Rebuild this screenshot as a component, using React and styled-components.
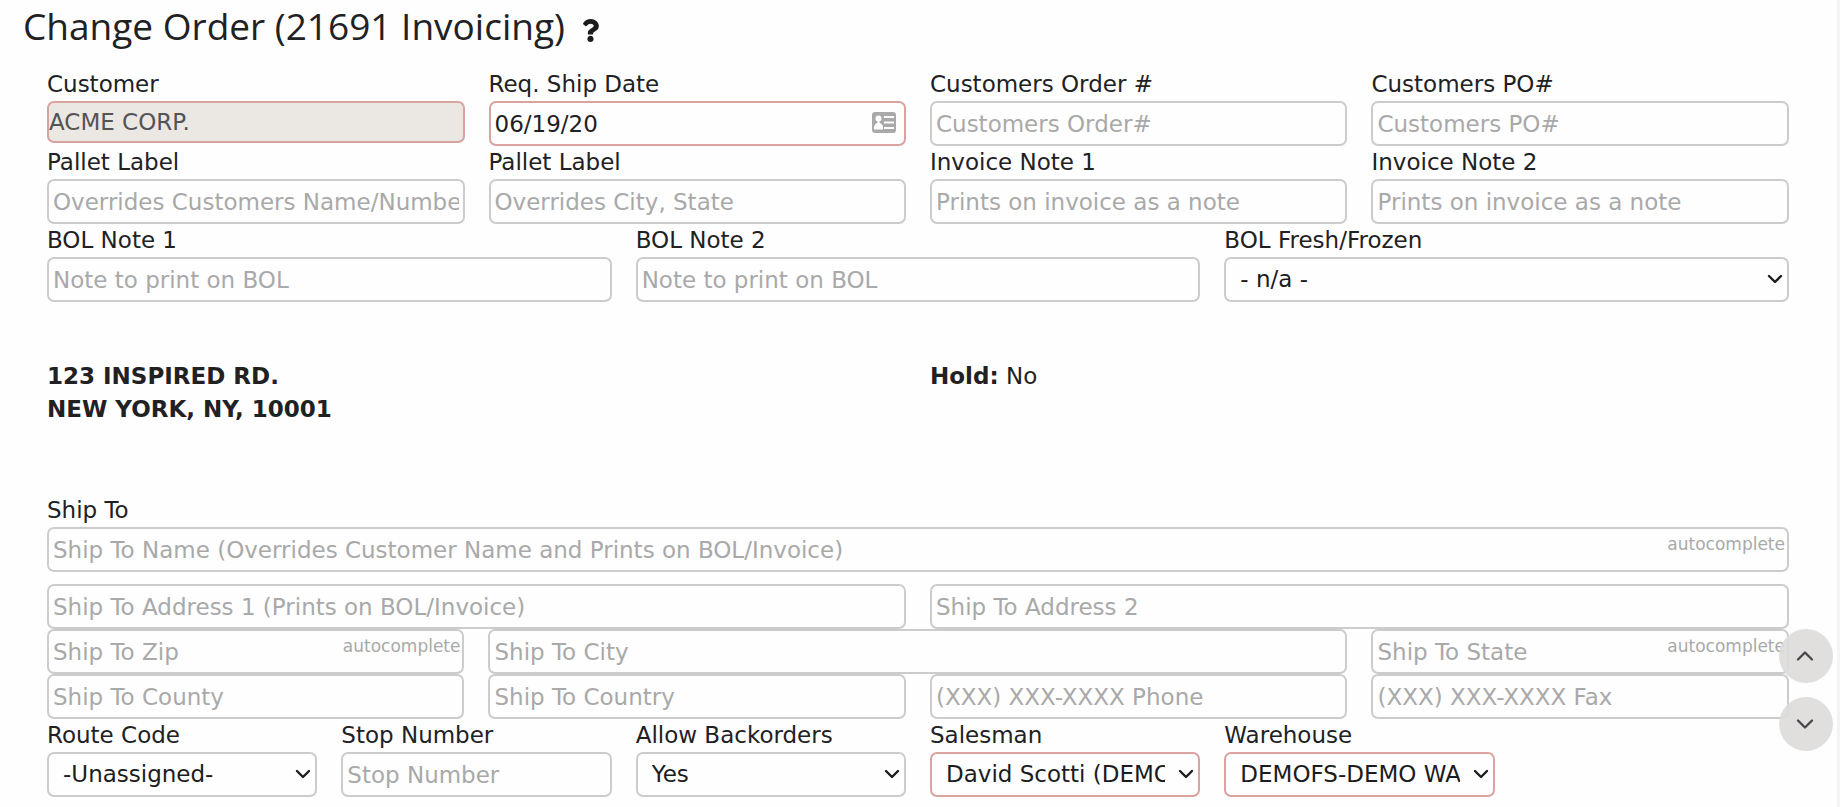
import React from 'react';
import styled, { createGlobalStyle } from 'styled-components';
import { ChevronDown, ChevronUp } from 'lucide-react';
import { FaQuestion } from 'react-icons/fa';

const GlobalStyle = createGlobalStyle`
    * {
        box-sizing: border-box;
    }

    body {
        margin: 0;
        background: #fefefe;
        color: #212124;
        font-family: Verdana, 'DejaVu Sans', sans-serif;
        font-size: 23px;
        line-height: 33px;
    }
`;

const Page = styled.main`
    min-height: 100vh;
    padding: 0 48px 10px 47px;
    border-right: 3px solid #f4f4f4;
`;

const Header = styled.header`
    display: flex;
    align-items: center;
    gap: 14px;
    height: 52px;
    margin: 0 0 16px -24px;
`;

const Title = styled.h1`
    margin: 0;
    font-family: 'Segoe UI', 'Open Sans', sans-serif;
    font-size: 37px;
    font-weight: 400;
    line-height: 52px;
`;

const HelpButton = styled.button`
    display: flex;
    padding: 8px 0 0;
    border: 0;
    background: none;
    color: #1c1c1e;
    font-size: 23px;
    cursor: pointer;
`;

const Grid = styled.div`
    display: grid;
    grid-template-columns: repeat(12, minmax(0, 1fr));
    column-gap: 24px;
    margin-top: ${props => props.$top || 0}px;
`;

const Cell = styled.div`
    grid-column: span ${props => props.$span};
    min-width: 0;
`;

const Label = styled.label`
    display: block;
`;

const ControlBox = styled.div`
    position: relative;
`;

const Input = styled.input`
    display: block;
    width: 100%;
    height: 45px;
    padding: 0 4px;
    border: 2px solid ${props => (props.required ? '#d9a3a0' : '#cccccc')};
    border-radius: 7px;
    background: #fefefe;
    color: #212124;
    font: inherit;
    outline: 0;

    &::placeholder {
        color: #a9a9a9;
        opacity: 1;
    }

    &:disabled {
        height: 42px;
        padding: 0;
        background: #ebe8e4;
        color: #545454;
    }
`;

const Select = styled.select`
    display: block;
    width: 100%;
    height: 45px;
    padding: 0 33px 0 14px;
    border: 2px solid ${props => (props.required ? '#d9a3a0' : '#cccccc')};
    border-radius: 7px;
    background: #fefefe;
    color: #1c1c1e;
    font: inherit;
    appearance: none;
    outline: 0;
`;

const SelectArrow = styled(ChevronDown)`
    position: absolute;
    top: 10px;
    right: 2px;
    color: #1c1c1e;
    pointer-events: none;
`;

const Hint = styled.span`
    position: absolute;
    top: 5px;
    right: 4px;
    color: #a9a9a9;
    font-size: 17px;
    line-height: 24px;
    pointer-events: none;
`;

const CardIcon = styled.svg`
    position: absolute;
    top: 11px;
    right: 10px;
    width: 24px;
    height: 21px;
`;

const Address = styled.address`
    font-style: normal;
    font-weight: 700;
`;

const ScrollButtons = styled.nav`
    position: fixed;
    right: 7px;
    bottom: 56px;
    display: grid;
    gap: 14px;
`;

const RoundButton = styled.button`
    display: flex;
    align-items: center;
    justify-content: center;
    width: 54px;
    height: 54px;
    padding: 0 3px 0 0;
    border: 0;
    border-radius: 50%;
    background: rgba(221, 220, 218, 0.9);
    color: #48484a;
    cursor: pointer;
`;

const Field = ({ span, id, label, hint, children, ...rest }) => (
    <Cell $span={span}>
        {label && <Label htmlFor={id}>{label}</Label>}
        <ControlBox>
            <Input id={id} type="text" aria-label={label ? undefined : rest.placeholder} {...rest}/>
            {hint && <Hint>{hint}</Hint>}
            {children}
        </ControlBox>
    </Cell>
);

const SelectField = ({ span, id, label, options, required }) => (
    <Cell $span={span}>
        <Label htmlFor={id}>{label}</Label>
        <ControlBox>
            <Select id={id} required={required}>
                {options.map(option => <option key={option}>{option}</option>)}
            </Select>
            <SelectArrow size={24} strokeWidth={2.4} aria-hidden="true"/>
        </ControlBox>
    </Cell>
);

const ContactCard = () => (
    <CardIcon viewBox="0 0 24 21" aria-hidden="true">
        <rect width="24" height="21" rx="3" fill="#a9a9a9"/>
        <circle cx="6.500" cy="6.500" r="3" fill="#fefefe"/>
        <path d="M2 17.500v-2c0-2.500 1.500-4 3.500-4.500V8h2v3c2 .5 3.500 2 3.500 4.500v2z" fill="#fefefe"/>
        <path d="M12 5h10M12 10.500h10M12 16h10" stroke="#fefefe" strokeWidth="2"/>
    </CardIcon>
);

const App = () => {
    return (
        <>
            <GlobalStyle/>
            <Page>
                <Header>
                    <Title>Change Order (21691 Invoicing)</Title>
                    <HelpButton type="button" aria-label="Help"><FaQuestion/></HelpButton>
                </Header>

                <form>
                    <Grid>
                        <Field span={3} id="customer" label="Customer" defaultValue="ACME CORP." required disabled/>
                        <Field span={3} id="shipDate" label="Req. Ship Date" defaultValue="06/19/20" required>
                            <ContactCard/>
                        </Field>
                        <Field span={3} id="order" label="Customers Order #" placeholder="Customers Order#"/>
                        <Field span={3} id="po" label="Customers PO#" placeholder="Customers PO#"/>

                        <Field span={3} id="pallet1" label="Pallet Label" placeholder="Overrides Customers Name/Number"/>
                        <Field span={3} id="pallet2" label="Pallet Label" placeholder="Overrides City, State"/>
                        <Field span={3} id="invoice1" label="Invoice Note 1" placeholder="Prints on invoice as a note"/>
                        <Field span={3} id="invoice2" label="Invoice Note 2" placeholder="Prints on invoice as a note"/>

                        <Field span={4} id="bol1" label="BOL Note 1" placeholder="Note to print on BOL"/>
                        <Field span={4} id="bol2" label="BOL Note 2" placeholder="Note to print on BOL"/>
                        <SelectField span={4} id="fresh" label="BOL Fresh/Frozen" options={['- n/a -', 'Fresh', 'Frozen']}/>
                    </Grid>

                    <Grid $top={58}>
                        <Cell $span={6}>
                            <Address>
                                123 INSPIRED RD.<br/>
                                NEW YORK, NY, 10001
                            </Address>
                        </Cell>
                        <Cell $span={6}><b>Hold:</b> No</Cell>
                    </Grid>

                    <Grid $top={68}>
                        <Field
                            span={12}
                            id="shipName"
                            label="Ship To"
                            placeholder="Ship To Name (Overrides Customer Name and Prints on BOL/Invoice)"
                            hint="autocomplete"
                        />
                    </Grid>

                    <Grid $top={12}>
                        <Field span={6} id="address1" placeholder="Ship To Address 1 (Prints on BOL/Invoice)"/>
                        <Field span={6} id="address2" placeholder="Ship To Address 2"/>

                        <Field span={3} id="zip" placeholder="Ship To Zip" hint="autocomplete"/>
                        <Field span={6} id="city" placeholder="Ship To City"/>
                        <Field span={3} id="state" placeholder="Ship To State" hint="autocomplete"/>

                        <Field span={3} id="county" placeholder="Ship To County"/>
                        <Field span={3} id="country" placeholder="Ship To Country"/>
                        <Field span={3} id="phone" placeholder="(XXX) XXX-XXXX Phone"/>
                        <Field span={3} id="fax" placeholder="(XXX) XXX-XXXX Fax"/>

                        <SelectField span={2} id="route" label="Route Code" options={['-Unassigned-']}/>
                        <Field span={2} id="stop" label="Stop Number" placeholder="Stop Number"/>
                        <SelectField span={2} id="backorders" label="Allow Backorders" options={['Yes', 'No']}/>
                        <SelectField span={2} id="salesman" label="Salesman" options={['David Scotti (DEMO)']} required/>
                        <SelectField span={2} id="warehouse" label="Warehouse" options={['DEMOFS-DEMO WAREHOUSE']} required/>
                    </Grid>
                </form>
            </Page>

            <ScrollButtons aria-label="Scroll">
                <RoundButton type="button" aria-label="Up"><ChevronUp size={28} strokeWidth={2}/></RoundButton>
                <RoundButton type="button" aria-label="Down"><ChevronDown size={28} strokeWidth={2}/></RoundButton>
            </ScrollButtons>
        </>
    );
};

export default App;
